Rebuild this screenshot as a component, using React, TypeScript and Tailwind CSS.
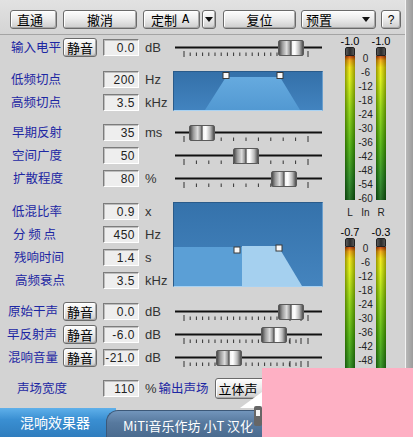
import React from 'react';

const cjk = "font-['Noto_Sans_CJK_SC',sans-serif]";
const latin = "font-['Liberation_Sans',sans-serif]";

function Btn({ className = '', children }: { className?: string; children?: React.ReactNode }) {
  return (
    <div
      className={`h-[19px] flex items-center rounded-[3px] border border-[#6a6a6a] bg-[linear-gradient(to_bottom,#fdfdfd,#ececec_45%,#cdcdcd)] shadow-[inset_1px_1px_0_#ffffff,inset_-1px_-1px_0_#a8a8a8] text-[13px] leading-none text-black ${cjk} ${className}`}
    >
      {children}
    </div>
  );
}

function Arrow() {
  return (
    <svg width="8" height="5" viewBox="0 0 8 5">
      <path d="M0 0h8L4 5z" fill="#111" />
    </svg>
  );
}

function TopBar() {
  return (
    <div className="h-[35px] flex items-start pt-[10px] pl-[10px] bg-[linear-gradient(to_bottom,#e2e2e2,#d4d4d4)] border-b border-[#a4a4a4]">
      <Btn className="w-[47px] pl-[6px]">直通</Btn>
      <Btn className="w-[74px] ml-[6px] justify-center">撤消</Btn>
      <Btn className="w-[57px] ml-[6px] pl-[7px]">
        定制 <span className="ml-[5px] font-['Liberation_Mono',monospace] text-[12px]">A</span>
      </Btn>
      <Btn className="w-[14px] ml-[2px] justify-center">
        <Arrow />
      </Btn>
      <Btn className="w-[73px] ml-[7px] justify-center">复位</Btn>
      <Btn className="w-[75px] ml-[5px] pl-[4px] pr-[5px] justify-between">
        <span>预置</span>
        <Arrow />
      </Btn>
      <Btn className="w-[20px] ml-[5px] justify-center">
        <span className={`${latin} text-[12px]`}>?</span>
      </Btn>
    </div>
  );
}

function ValueBox({ value }: { value: string }) {
  return (
    <div
      className={`w-[36px] h-[17px] flex items-center justify-end pr-[3px] bg-[#eeeeee] border border-t-[#7c7c7c] border-l-[#7c7c7c] border-b-[#ffffff] border-r-[#ffffff] shadow-[inset_1px_1px_0_#bdbdbd] text-[12px] tracking-[0.5px] text-[#222] ${latin}`}
    >
      {value}
    </div>
  );
}

type RowProps = {
  label: string;
  indent: number;
  value: string;
  unit: string;
  mute?: boolean;
};

const indents: Record<number, string> = {
  7: 'pl-[7px]',
  8: 'pl-[8px]',
  11: 'pl-[11px]',
  12: 'pl-[12px]',
  13: 'pl-[13px]',
  14: 'pl-[14px]',
  15: 'pl-[15px]',
  17: 'pl-[17px]',
};

function Row({ label, indent, value, unit, mute }: RowProps) {
  return (
    <div className="w-[170px] h-[23px] flex items-center shrink-0">
      <div className={`w-[63px] whitespace-pre text-[12.5px] leading-none text-[#1d27a3] ${cjk} ${indents[indent]}`}>
        {label}
      </div>
      <div className="w-[40px] flex items-center">
        {mute && <Btn className="w-[34px] justify-center">静音</Btn>}
      </div>
      <ValueBox value={value} />
      <span className={`ml-[6px] text-[13px] leading-none text-[#333] ${latin}`}>{unit}</span>
    </div>
  );
}

type TickKind = 'fine' | 'coarse' | 'mixed';

function Slider({ thumb, ticks }: { thumb: number; ticks: TickKind }) {
  const lines: { x: number; tall: boolean }[] = [];
  if (ticks === 'fine') {
    for (let i = 0; i <= 20; i++) lines.push({ x: 14 + i * 6.2, tall: i === 0 || i === 20 });
  } else if (ticks === 'coarse') {
    for (let i = 0; i <= 10; i++) lines.push({ x: 14 + i * 12.4, tall: i === 0 || i === 10 });
  } else {
    for (let i = 0; i <= 17; i++) lines.push({ x: 14 + i * 6.2, tall: i === 0 });
    lines.push({ x: 120, tall: true }, { x: 126, tall: false }, { x: 131, tall: true }, { x: 138, tall: true });
  }
  return (
    <div className="relative w-[155px] h-[23px]">
      <svg width="155" height="23" className="absolute left-0 top-0">
        <rect x="5" y="10.5" width="147" height="2" fill="#111" />
        {lines.map((l, i) => (
          <line
            key={i}
            x1={l.x}
            x2={l.x}
            y1={l.tall ? 15 : 16.5}
            y2={l.tall ? 21 : 20}
            stroke="#333"
            strokeWidth="1"
          />
        ))}
      </svg>
      <div
        className="absolute top-[4px] w-[26px] h-[16px] rounded-[2px] border border-[#5a5a5a] bg-[linear-gradient(to_right,#4a4a4a,#9a9a9a_14%,#dedede_32%,#8c8c8c_46%,#3e3e3e_50%,#f4f4f4_55%,#ffffff_66%,#bcbcbc_84%,#4c4c4c)]"
        style={{ left: thumb - 170 }}
      />
    </div>
  );
}

function Handle({ x, y }: { x: number; y: number }) {
  return <rect x={x - 3} y={y - 3} width="6" height="6" fill="#fafafa" stroke="#3a3a3a" strokeWidth="1" />;
}

function Graph1() {
  return (
    <div className="ml-[3px] mt-[3px] w-[150px] h-[40px] border-t border-l border-[#2a5b8a] border-b border-b-[#a9d2f2] border-r border-r-[#6b9fcd]">
      <svg width="148" height="38" viewBox="0 0 148 38" className="block">
        <defs>
          <linearGradient id="g1bg" x1="0" y1="0" x2="0" y2="1">
            <stop offset="0" stopColor="#3470a9" />
            <stop offset="1" stopColor="#4283bf" />
          </linearGradient>
          <linearGradient id="g1tr" x1="0" y1="0" x2="0" y2="1">
            <stop offset="0" stopColor="#66aadf" />
            <stop offset="1" stopColor="#5299d2" />
          </linearGradient>
        </defs>
        <rect width="148" height="38" fill="url(#g1bg)" />
        <polygon points="52,5 106,5 126,38 31,38" fill="url(#g1tr)" />
        <Handle x={52} y={3.5} />
        <Handle x={106} y={3.5} />
      </svg>
    </div>
  );
}

function Graph2() {
  return (
    <div className="ml-[3px] mt-[2px] w-[150px] h-[85px] border-t border-l border-[#2a5b8a] border-b border-b-[#a9d2f2] border-r border-r-[#6b9fcd]">
      <svg width="148" height="83" viewBox="0 0 148 83" className="block">
        <defs>
          <linearGradient id="g2bg" x1="0" y1="0" x2="0" y2="1">
            <stop offset="0" stopColor="#3572ab" />
            <stop offset="1" stopColor="#4484be" />
          </linearGradient>
        </defs>
        <rect width="148" height="83" fill="url(#g2bg)" />
        <rect x="0" y="44" width="68" height="39" fill="#5b9fd6" />
        <polygon points="68,43 104,43 128,83 68,83" fill="#a5d0ef" />
        <Handle x={63} y={47} />
        <Handle x={105} y={45} />
      </svg>
    </div>
  );
}

const scale = ['0', '-6', '-12', '-18', '-24', '-30', '-36', '-42', '-48', '-54', '-60'];

function Bar({ h }: { h: string }) {
  return (
    <div className={`w-[10px] flex flex-col ${h}`}>
      <div className="h-[9px] rounded-t-[2px] bg-[linear-gradient(to_right,#5a5a5a,#2c2c2c_50%,#555)] border border-[#222]" />
      <div className="relative flex-1 bg-[linear-gradient(to_bottom,#c23800_0%,#f3a400_3%,#f2e400_8%,#d8ef00_16%,#8cd400_36%,#46b000_62%,#1f8516_85%,#106010_100%)]">
        <div className="absolute inset-0 bg-[linear-gradient(to_right,rgba(0,0,0,0.35),rgba(255,255,255,0.12)_45%,rgba(0,0,0,0.35))]" />
      </div>
    </div>
  );
}

function MeterBlock({ l, r, h, pt }: { l: string; r: string; h: string; pt: string }) {
  return (
    <div className={`flex flex-col ${latin}`}>
      <div className="flex h-[12px] items-center text-[11px] leading-none text-black">
        <span className="w-[20px] -ml-[5px] text-center">{l}</span>
        <span className="w-[20px] ml-[11px] text-center">{r}</span>
      </div>
      <div className="flex">
        <Bar h={h} />
        <div className={`w-[21px] flex flex-col ${pt}`}>
          {scale.map((s) => (
            <div key={s} className="h-[14px] flex items-center justify-center text-[10px] leading-none text-[#222]">
              {s}
            </div>
          ))}
        </div>
        <Bar h={h} />
      </div>
    </div>
  );
}

function Meters() {
  return (
    <div className="w-[70px] pl-[10px] flex flex-col">
      <MeterBlock l="-1.0" r="-1.0" h="h-[153px]" pt="pt-[5px]" />
      <div className={`flex h-[14px] items-center text-[10px] leading-none text-[#222] ${latin}`}>
        <span className="w-[10px] text-center">L</span>
        <span className="w-[21px] text-center">In</span>
        <span className="w-[10px] text-center">R</span>
      </div>
      <div className="mt-[6px]">
        <MeterBlock l="-0.7" r="-0.3" h="h-[155px]" pt="pt-[4px]" />
      </div>
    </div>
  );
}

function BottomBar() {
  return (
    <div className={`h-[29px] flex text-white ${cjk}`}>
      <div className="w-[116px] h-full pl-[20px] pt-[4px] text-[14px] leading-[20px] bg-[linear-gradient(to_bottom,#5fb0ea,#3a8fd2_40%,#2f7dbe)]">
        混响效果器
      </div>
      <div className="-ml-[10px] flex-1 mt-[2px] h-[27px] pl-[16px] pt-[5px] text-[13px] leading-[20px] rounded-tl-[12px] border-t border-l border-[#3c5878] bg-[linear-gradient(to_bottom,#7295bb,#57799e_45%,#4a6b8f)]">
        MiTi音乐作坊 小T 汉化
      </div>
    </div>
  );
}

export default function App() {
  return (
    <div className="relative w-[413px] h-[437px] overflow-hidden flex bg-[#d3d3d3]">
      <div className="w-[405px] flex flex-col">
        <TopBar />
        <div className="h-[373px] flex">
          <div className="w-[335px] flex flex-col">
            <div className="flex mt-[1px]">
              <Row label="输入电平" indent={11} value="0.0" unit="dB" mute />
              <Slider thumb={278} ticks="fine" />
            </div>
            <div className="flex mt-[9px]">
              <div className="flex flex-col">
                <Row label="低频切点" indent={11} value="200" unit="Hz" />
                <Row label="高频切点" indent={11} value="3.5" unit="kHz" />
              </div>
              <Graph1 />
            </div>
            <div className="flex flex-col mt-[7px]">
              <div className="flex">
                <Row label="早期反射" indent={12} value="35" unit="ms" />
                <Slider thumb={189} ticks="coarse" />
              </div>
              <div className="flex">
                <Row label="空间广度" indent={12} value="50" unit="" />
                <Slider thumb={233} ticks="coarse" />
              </div>
              <div className="flex">
                <Row label="扩散程度" indent={13} value="80" unit="%" />
                <Slider thumb={271} ticks="coarse" />
              </div>
            </div>
            <div className="flex mt-[10px]">
              <div className="flex flex-col">
                <Row label="低混比率" indent={12} value="0.9" unit="x" />
                <Row label="分 频 点" indent={13} value="450" unit="Hz" />
                <Row label="残响时间" indent={14} value="1.4" unit="s" />
                <Row label="高频衰点" indent={15} value="3.5" unit="kHz" />
              </div>
              <Graph2 />
            </div>
            <div className="flex flex-col mt-[8px]">
              <div className="flex">
                <Row label="原始干声" indent={8} value="0.0" unit="dB" mute />
                <Slider thumb={278} ticks="mixed" />
              </div>
              <div className="flex">
                <Row label="早反射声" indent={7} value="-6.0" unit="dB" mute />
                <Slider thumb={261} ticks="mixed" />
              </div>
              <div className="flex">
                <Row label="混响音量" indent={8} value="-21.0" unit="dB" mute />
                <Slider thumb={216} ticks="mixed" />
              </div>
            </div>
            <div className="flex items-center h-[23px] mt-[8px]">
              <div className={`w-[103px] pl-[17px] text-[12.5px] leading-none text-[#1d27a3] ${cjk}`}>声场宽度</div>
              <ValueBox value="110" />
              <span className={`ml-[6px] text-[13px] leading-none text-[#333] ${latin}`}>%</span>
              <span className={`ml-[2px] text-[12.5px] leading-none text-[#1d27a3] ${cjk}`}>输出声场</span>
              <Btn className="ml-[6px] w-[80px] h-[21px] pl-[3px]">立体声</Btn>
            </div>
          </div>
          <Meters />
        </div>
        <BottomBar />
      </div>
      <div className="w-[8px] h-full border-l border-[#f2f2f2] bg-[linear-gradient(to_right,#b8b8b8,#9c9c9c)]" />

      {/* watermark corner */}
      <svg className="absolute left-[238px] top-[388px]" width="26" height="40" viewBox="0 0 26 40">
        <polygon points="2,20 24,4 24,20" fill="#ffffff" />
        <rect x="16" y="18" width="8" height="20" rx="2" fill="#666" />
        <rect x="18" y="22" width="4" height="6" fill="#f4f4f4" />
      </svg>
      <div className="absolute left-[262px] top-[368px] w-[151px] h-[69px] bg-[#feb0c4]" />
    </div>
  );
}
